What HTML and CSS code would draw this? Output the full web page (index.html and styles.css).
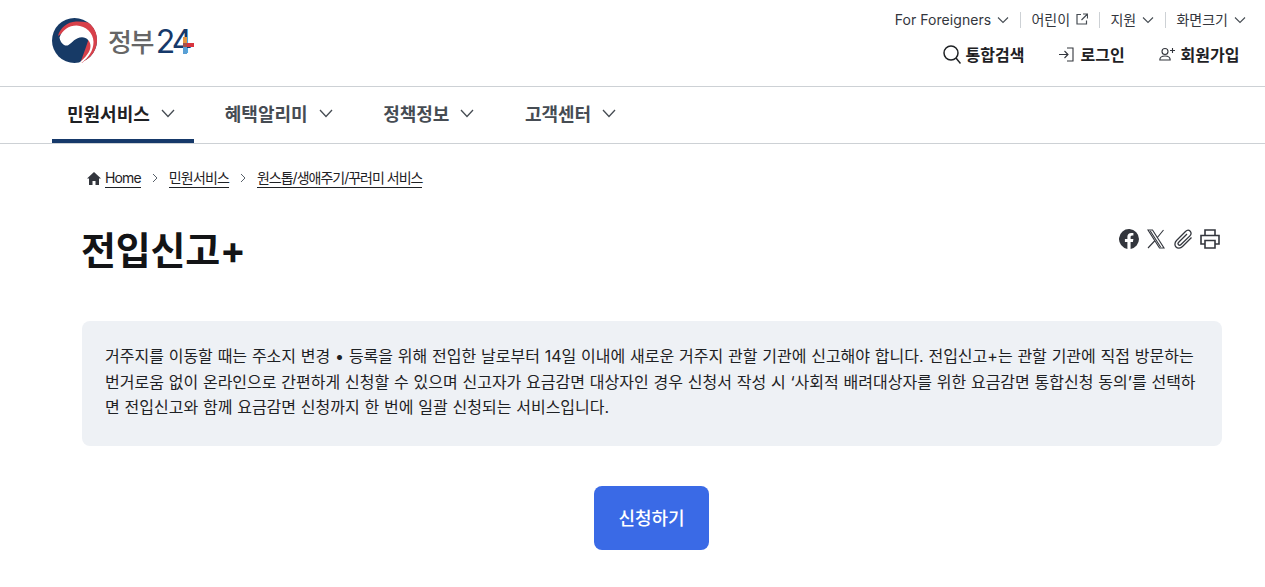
FILE: index.html
```html
<!DOCTYPE html>
<html lang="ko">
<head>
<meta charset="utf-8">
<title>전입신고+ | 정부24</title>
<link rel="stylesheet" href="styles.css">
</head>
<body>
<header class="top">
  <a class="logo" href="#">
    <svg class="emblem" width="46" height="46" viewBox="0 0 46 46" aria-hidden="true">
      <circle cx="22.5" cy="22.5" r="22.5" fill="#173a66"/>
      <path d="M6 18C8 10 15 4 24 3.500c4-.2 8 .2 12 1 6 4 9 10.500 9 18 0 9-5.500 17-13.500 21L30 45l-1-2 5-14 4-12L22 8z" fill="#d8404a"/>
      <path d="M7.500 19.500C10 12 17 7.500 24.500 7.500 34 8 41.500 15 41.500 24c0 8.500-5 15.500-11.500 20.500l-3 .2C33 40 38.500 34 38.500 28c0-4.500-3.500-8.700-8.500-8.700-6.500 0-10 5.700-13.500 7.700-3.500 2-8-1.500-9-7.500z" fill="#fff"/>
    </svg>
    <span class="logo-name">정부</span><span class="logo-num">24</span>
    <svg class="plus" width="11" height="17" viewBox="0 0 11 17" aria-hidden="true">
      <rect x="0" y="0" width="4" height="6" fill="#e9963f"/>
      <rect x="0" y="6" width="4" height="4" fill="#a5524a"/>
      <rect x="0" y="10" width="4" height="7" fill="#5a9fd4"/>
      <rect x="4" y="6" width="7" height="4" fill="#d8343f"/>
    </svg>
  </a>
  <div class="top-right">
    <ul class="util">
      <li class="util-item">For Foreigners <svg class="chev-sm" viewBox="0 0 12 8"><path d="M1 1.500l5 5 5-5"/></svg></li>
      <li class="util-item">어린이 <svg class="ext" viewBox="0 0 12 12"><path d="M5 1.500H1v9.500h9.500V7.500M7 1h4.500v4.500M11.500 1L5.500 7"/></svg></li>
      <li class="util-item">지원 <svg class="chev-sm" viewBox="0 0 12 8"><path d="M1 1.500l5 5 5-5"/></svg></li>
      <li class="util-item">화면크기 <svg class="chev-sm" viewBox="0 0 12 8"><path d="M1 1.500l5 5 5-5"/></svg></li>
    </ul>
    <ul class="member">
      <li class="member-item"><svg class="ic-search" viewBox="0 0 18 19"><circle cx="8" cy="8" r="7"/><path d="M13 13l4.500 5.500"/></svg>통합검색</li>
      <li class="member-item"><svg class="ic-login" viewBox="0 0 16 15"><path d="M9 1h6v13H9M1 7.500h9M6.500 4l3.500 3.500L6.500 11"/></svg>로그인</li>
      <li class="member-item"><svg class="ic-join" viewBox="0 0 16 14"><circle cx="6" cy="4.500" r="3"/><path d="M.8 13c0-2.800 2.300-4 5.200-4s5.200 1.200 5.200 4zM11 3.500h5M13.500 1v5"/></svg>회원가입</li>
    </ul>
  </div>
</header>
<nav class="gnb">
  <a class="gnb-item active" href="#">민원서비스<svg class="chev" viewBox="0 0 14 9"><path d="M1 1l6 6.500L13 1"/></svg></a>
  <a class="gnb-item" href="#">혜택알리미<svg class="chev" viewBox="0 0 14 9"><path d="M1 1l6 6.500L13 1"/></svg></a>
  <a class="gnb-item" href="#">정책정보<svg class="chev" viewBox="0 0 14 9"><path d="M1 1l6 6.500L13 1"/></svg></a>
  <a class="gnb-item" href="#">고객센터<svg class="chev" viewBox="0 0 14 9"><path d="M1 1l6 6.500L13 1"/></svg></a>
</nav>
<main class="content">
  <ol class="crumbs">
    <li class="crumb"><svg class="home" viewBox="0 0 14 13"><path d="M7 0L0 6.500h2V13h3.500V9h3v4H12V6.500h2z"/></svg><a href="#">Home</a></li>
    <li class="sep"><svg viewBox="0 0 6 10"><path d="M1 1l4 4-4 4"/></svg></li>
    <li class="crumb"><a href="#">민원서비스</a></li>
    <li class="sep"><svg viewBox="0 0 6 10"><path d="M1 1l4 4-4 4"/></svg></li>
    <li class="crumb crumb-last"><a href="#">원스톱/생애주기/꾸러미 서비스</a></li>
  </ol>
  <div class="title-row">
    <h1 class="title">전입신고+</h1>
    <div class="share">
      <svg class="ic-fb" viewBox="0 0 20 20"><path d="M20 10a10 10 0 1 0-11.600 9.900v-7H5.900V10h2.500V7.800c0-2.500 1.500-3.900 3.800-3.900 1.100 0 2.200.2 2.200.2v2.500h-1.200c-1.200 0-1.600.8-1.600 1.600V10h2.800l-.5 2.900h-2.300v7A10 10 0 0 0 20 10z"/></svg>
      <svg class="ic-x" viewBox="0 0 20 20"><path d="M2 1h4.500l11.500 18h-4.500zM17.500 1L11 9M9 11.500L2 19M4.300 2l10.300 16"/></svg>
      <svg class="ic-clip" viewBox="0 0 20 20"><path d="M18.500 8.500l-9 9c-2 2-5 2-6.500.5S1.500 13.500 3.500 11.500L12.500 2.500c1.500-1.500 3.500-1.500 4.700-.3s1.200 3.200-.3 4.700L8 15.500c-.8.8-1.900.8-2.500.2s-.6-1.700.2-2.500L14 5"/></svg>
      <svg class="ic-print" viewBox="0 0 20 20"><path d="M5 6V1h10v5M5 15H1V6.500h18V15h-4M5 11.500h10v7.500H5z"/></svg>
    </div>
  </div>
  <p class="desc">거주지를 이동할 때는 주소지 변경 • 등록을 위해 전입한 날로부터 14일 이내에 새로운 거주지 관할 기관에 신고해야 합니다. 전입신고+는 관할 기관에 직접 방문하는 번거로움 없이 온라인으로 간편하게 신청할 수 있으며 신고자가 요금감면 대상자인 경우 신청서 작성 시 ‘사회적 배려대상자를 위한 요금감면 통합신청 동의’를 선택하면 전입신고와 함께 요금감면 신청까지 한 번에 일괄 신청되는 서비스입니다.</p>
  <div class="actions"><a class="apply" href="#">신청하기</a></div>
</main>
</body>
</html>
```
FILE: styles.css
```css
* { box-sizing: border-box; }
html, body { margin: 0; padding: 0; }
body {
  font-family: Inter, "Noto Sans CJK KR", "Noto Sans", sans-serif;
  color: #1e2124;
  background: #fff;
  overflow: hidden;
  height: 587px;
}
a { color: inherit; text-decoration: none; }
ul, ol { list-style: none; margin: 0; padding: 0; }
svg { display: block; flex: none; }

.top {
  height: 87px;
  border-bottom: 1px solid #cdd1d5;
  padding: 0 19px 0 52px;
  display: flex;
  justify-content: space-between;
}
.logo { display: flex; align-items: center; height: 46px; margin-top: 18px; }
.emblem { margin-right: 10px; }
.logo-name { font-size: 26px; color: #666; font-weight: 500; letter-spacing: -1.500px; margin-top: -1px; }
.logo-num { font-size: 32px; color: #16396a; font-weight: 400; letter-spacing: -3px; margin: 0 0 0 3px; }
.plus { margin: 9px 0 0 -6.500px; }

.top-right { display: flex; flex-direction: column; align-items: flex-end; }
.util { display: flex; height: 18px; margin-top: 11px; align-items: center; }
.util-item {
  display: flex; align-items: center; gap: 6px;
  font-size: 14px; color: #33363d;
  padding: 0 0 0 10px; margin-left: 11.300px;
  border-left: 1px solid #cdd1d5;
  height: 16px; line-height: 16px;
}
.util-item:first-child { border-left: 0; letter-spacing: .05px; }
.chev-sm { width: 12px; height: 8px; fill: none; stroke: #464c53; stroke-width: 1.100; }
.ext { width: 12px; height: 12px; fill: none; stroke: #464c53; stroke-width: 1.200; margin-bottom: 2px; }

.member { display: flex; gap: 34px; margin-top: 15px; margin-right: 6.500px; height: 20px; }
.member-item { display: flex; align-items: center; font-size: 16px; font-weight: 700; color: #1e2124; }
.ic-search { width: 18px; height: 19px; fill: none; stroke: #1e2124; stroke-width: 1.500; margin-right: 5px; }
.ic-login { width: 16px; height: 15px; fill: none; stroke: #33363d; stroke-width: 1.100; margin-right: 6px; }
.ic-join { width: 16px; height: 14px; fill: none; stroke: #33363d; stroke-width: 1.100; margin-right: 6px; }

.gnb { display: flex; height: 57px; border-bottom: 1px solid #cdd1d5; padding-left: 52px; }
.gnb-item {
  display: flex; align-items: center; gap: 11px;
  height: 56px; font-size: 18px; font-weight: 700; color: #464c53;
  padding: 0 19px 4px 15px; margin-right: 16.500px;
}
.gnb-item.active { color: #1e2124; box-shadow: inset 0 -4px 0 #16396a; margin-right: 16px; }
.chev { width: 14px; height: 9px; fill: none; stroke: #464c53; stroke-width: 1.300; }

.content { padding: 0 43px 0 82px; }
.crumbs { display: flex; align-items: center; height: 20px; margin: 24px 0 0 5px; font-size: 14px; letter-spacing: -.85px; color: #1e2124; }
.crumb { display: flex; align-items: center; }
.crumb-last { letter-spacing: -1px; }
.crumb a { border-bottom: 1px solid #1e2124; line-height: 18px; }
.home { width: 14px; height: 13px; fill: #33363d; margin-right: 4px; }
.sep { margin: 0 11px; }
.sep svg { width: 6px; height: 10px; fill: none; stroke: #58616a; stroke-width: 1; }

.title-row { display: flex; justify-content: space-between; margin-top: 34px; }
.title { margin: 0 0 0 -1px; font-size: 38px; line-height: 56px; font-weight: 700; color: #131416; letter-spacing: -.2px; }
.share { display: flex; gap: 7px; align-items: center; height: 20px; margin-top: 7px; margin-right: 2px; }
.ic-fb { width: 20px; height: 20px; fill: #33363d; }
.ic-x { width: 20px; height: 20px; fill: none; stroke: #33363d; stroke-width: 1.100; }
.ic-clip { width: 20px; height: 20px; fill: none; stroke: #33363d; stroke-width: 1.300; }
.ic-print { width: 20px; height: 20px; fill: none; stroke: #33363d; stroke-width: 1.600; }

.desc {
  margin: 43px 0 0;
  background: #eef1f5;
  border-radius: 8px;
  padding: 23px 23px;
  font-size: 16px; line-height: 25.500px; color: #1e2124;
  height: 125px;
  word-break: break-all;
  word-spacing: .3px;
}
.actions { display: flex; justify-content: center; margin-top: 40px; padding-right: 1px; }
.apply {
  display: flex; align-items: center; justify-content: center;
  width: 115px; height: 64px; padding-bottom: 2px;
  background: #3a6ae6; color: #fff; border-radius: 8px;
  font-size: 18px; font-weight: 500;
}
```
